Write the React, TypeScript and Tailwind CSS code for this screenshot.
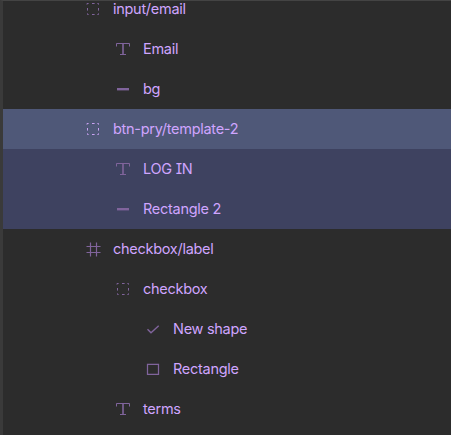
import React from "react";

type Kind = "group" | "text" | "line" | "frame" | "check" | "rect";

const Icon = ({ kind, bright }: { kind: Kind; bright?: boolean }) => (
  <svg
    viewBox="0 0 16 16"
    fill="none"
    stroke="currentColor"
    className={`size-4 shrink-0 ${bright ? "text-[#c9a2f2]" : "text-[#80649c]"}`}
  >
    {kind === "group" && (
      <path d="M2 3.6V2.5H3.6M7 2.5H9.6M12.4 2.5H13.5V3.6M2.5 7V9.6M13.5 7V9.6M2.5 12.4V13.5H3.6M7 13.5H9.6M12.4 13.5H13.5V12.4" />
    )}
    {kind === "text" && (
      <>
        <path d="M1.5 5.5V2.5H14.5V5.5M5 13.5H11" />
        <path d="M8 3V13" strokeWidth="1.6" />
      </>
    )}
    {kind === "line" && <path d="M2 8.2H14" strokeWidth="2.4" />}
    {kind === "frame" && <path d="M5.5 1.5V15.5M11.5 1.5V15.5M1.5 5.5H15.5M1.5 11.5H15.5" strokeWidth="1.2" />}
    {kind === "check" && <path d="M2.5 8.2L6 11.7L13.7 4.8" strokeWidth="1.4" />}
    {kind === "rect" && <path d="M2.5 3.4H13.5V13.4H2.5Z" strokeWidth="1.25" />}
  </svg>
);

const layers: { name: string; kind: Kind; indent: string; bg?: string; bright?: boolean }[] = [
  { name: "input/email", kind: "group", indent: "pl-[82px]" },
  { name: "Email", kind: "text", indent: "pl-[112px]" },
  { name: "bg", kind: "line", indent: "pl-[112px]" },
  { name: "btn-pry/template-2", kind: "group", indent: "pl-[82px]", bg: "bg-[#4f5878]", bright: true },
  { name: "LOG IN", kind: "text", indent: "pl-[112px]", bg: "bg-[#3e4260]" },
  { name: "Rectangle 2", kind: "line", indent: "pl-[112px]", bg: "bg-[#3e4260]" },
  { name: "checkbox/label", kind: "frame", indent: "pl-[82px]" },
  { name: "checkbox", kind: "group", indent: "pl-[112px]" },
  { name: "New shape", kind: "check", indent: "pl-[142px]" },
  { name: "Rectangle", kind: "rect", indent: "pl-[142px]" },
  { name: "terms", kind: "text", indent: "pl-[112px]" },
];

export default function App() {
  return (
    <div className="h-[435px] w-[451px] overflow-hidden border-l-3 border-t border-l-[#3a3a3a] border-t-[#444444] bg-[#2c2c2c] font-['Inter',sans-serif] [font-feature-settings:'cv08'_1]">
      <ul className="-mt-3">
        {layers.map((l) => (
          <li key={l.name} className={`flex h-10 items-center gap-3 ${l.indent} ${l.bg ?? ""}`}>
            <Icon kind={l.kind} bright={l.bright} />
            <span className="whitespace-nowrap text-[14.5px] leading-5 tracking-[-0.28px] text-[#cfa5ff]">{l.name}</span>
          </li>
        ))}
      </ul>
    </div>
  );
}
